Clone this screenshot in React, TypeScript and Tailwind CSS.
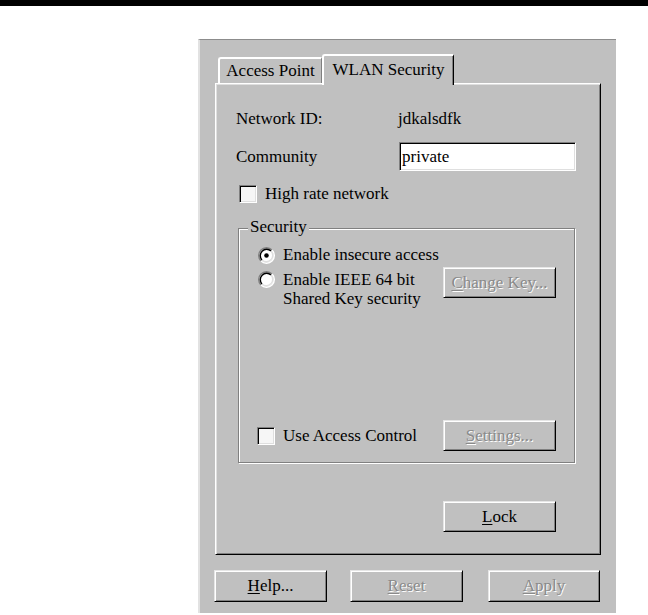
import React from "react";

const Radio = ({ checked }: { checked?: boolean }) => (
  <svg width="17" height="17" viewBox="0 0 12 12" className="shrink-0">
    <circle cx="6" cy="6" r="5" fill="#fff" />
    <path d="M2.11 9.89 A5.5 5.5 0 0 1 9.89 2.11" stroke="#808080" strokeWidth="1" fill="none" />
    <path d="M9.89 2.11 A5.5 5.5 0 0 1 2.11 9.89" stroke="#ffffff" strokeWidth="1" fill="none" />
    <path d="M2.82 9.18 A4.5 4.5 0 0 1 9.18 2.82" stroke="#000" strokeWidth="1" fill="none" />
    <path d="M9.18 2.82 A4.5 4.5 0 0 1 2.82 9.18" stroke="#dfdfdf" strokeWidth="1" fill="none" />
    {checked && <circle cx="6" cy="6" r="1.6" fill="#000" />}
  </svg>
);

const Check = () => (
  <div className="w-[18px] h-[18px] shrink-0 bg-[#f6f6f6] border border-[#808080] border-b-white border-r-white shadow-[inset_1px_1px_0_#000,inset_-1px_-1px_0_#dfdfdf]" />
);

const Btn = ({
  children,
  disabled,
  className = "",
}: {
  children: React.ReactNode;
  disabled?: boolean;
  className?: string;
}) => (
  <div
    className={
      "flex items-center justify-center bg-[#c0c0c0] border border-[#e6e6e6] border-b-black border-r-black shadow-[inset_1px_1px_0_#fff,inset_-1px_-1px_0_#808080] " +
      (disabled ? "text-[#8a8a8a] [text-shadow:1px_1px_0_#fff] " : "text-black ") +
      className
    }
  >
    {children}
  </div>
);

const U = ({ children }: { children: React.ReactNode }) => (
  <span className="underline underline-offset-2">{children}</span>
);

export default function App() {
  return (
    <div className="w-[648px] h-[615px] bg-white overflow-hidden font-['Liberation_Serif',serif] text-[17px] text-black leading-[20px]">
      <div className="h-[6px] w-full bg-black" />
      <div className="ml-[198px] mt-[33px] w-[418px] h-[574px] bg-[#c0c0c0] border-t border-t-[#8c8c8c] border-l-2 border-l-[#e2e2e2] pl-[14px] pt-[14px] flex flex-col">
        {/* tabs */}
        <div className="ml-[4px] flex items-end h-[29px]">
          <div className="w-[104px] h-[26px] flex items-center justify-center border-t-2 border-l-2 border-white rounded-tl-[3px] border-r border-r-[#808080]">
            Access Point
          </div>
          <div className="relative z-10 w-[132px] h-[31px] -mb-[2px] pb-[2px] flex items-center justify-center bg-[#c0c0c0] border-t-2 border-l-2 border-white rounded-tl-[3px] border-r border-r-black shadow-[inset_-1px_0_0_#808080]">
            WLAN Security
          </div>
        </div>
        {/* panel */}
        <div className="ml-[1px] w-[386px] h-[472px] border border-white border-r-black border-b-black shadow-[inset_1px_1px_0_#dfdfdf,inset_-1px_-1px_0_#808080] pl-[20px] pt-[25px] flex flex-col">
          <div className="flex items-center h-[20px]">
            <div className="w-[162px]">Network ID:</div>
            <div>jdkalsdfk</div>
          </div>
          <div className="mt-[13px] flex items-center h-[29px]">
            <div className="w-[163px]">Community</div>
            <div className="w-[177px] h-[29px] bg-white border border-[#808080] border-b-white border-r-white shadow-[inset_1px_1px_0_#000,inset_-1px_-1px_0_#dfdfdf] pl-[2px] flex items-center">
              private
            </div>
          </div>
          <div className="mt-[14px] ml-[3px] flex items-center h-[18px]">
            <Check />
            <span className="ml-[8px]">High rate network</span>
          </div>
          {/* group box */}
          <div className="mt-[25px] ml-[2px] w-[337px] h-[235px] relative border border-[#808080] shadow-[inset_1px_1px_0_#fff,1px_1px_0_#fff] pl-[19px] pr-[18px] pt-[16px] pb-[11px] flex flex-col">
            <span className="absolute -top-[12px] left-[9px] px-[2px] bg-[#c0c0c0] leading-[20px]">
              Security
            </span>
            <div className="flex items-center h-[20px]">
              <Radio checked />
              <span className="ml-[8px]">Enable insecure access</span>
            </div>
            <div className="mt-[2px] flex items-start justify-between">
              <div className="flex items-start pt-[3px]">
                <div className="mt-[1px]">
                  <Radio />
                </div>
                <div className="ml-[8px] leading-[19px]">
                  <div>Enable IEEE 64 bit</div>
                  <div>Shared Key security</div>
                </div>
              </div>
              <Btn disabled className="w-[113px] h-[31px]">
                <span>
                  <U>C</U>hange Key...
                </span>
              </Btn>
            </div>
            <div className="flex-1" />
            <div className="flex items-center justify-between h-[31px]">
              <div className="flex items-center -ml-[1px]">
                <Check />
                <span className="ml-[8px]">Use Access Control</span>
              </div>
              <Btn disabled className="w-[113px] h-[31px]">
                <span>
                  <U>S</U>ettings...
                </span>
              </Btn>
            </div>
          </div>
          <Btn className="mt-[38px] ml-[207px] w-[113px] h-[31px]">
            <span>
              <U>L</U>ock
            </span>
          </Btn>
        </div>
        {/* bottom buttons */}
        <div className="mt-[15px] flex">
          <Btn className="w-[113px] h-[32px]">
            <span>
              <U>H</U>elp...
            </span>
          </Btn>
          <Btn disabled className="ml-[23px] w-[113px] h-[32px]">
            <span>
              <U>R</U>eset
            </span>
          </Btn>
          <Btn disabled className="ml-[25px] w-[112px] h-[32px]">
            <span>
              <U>A</U>pply
            </span>
          </Btn>
        </div>
      </div>
    </div>
  );
}
